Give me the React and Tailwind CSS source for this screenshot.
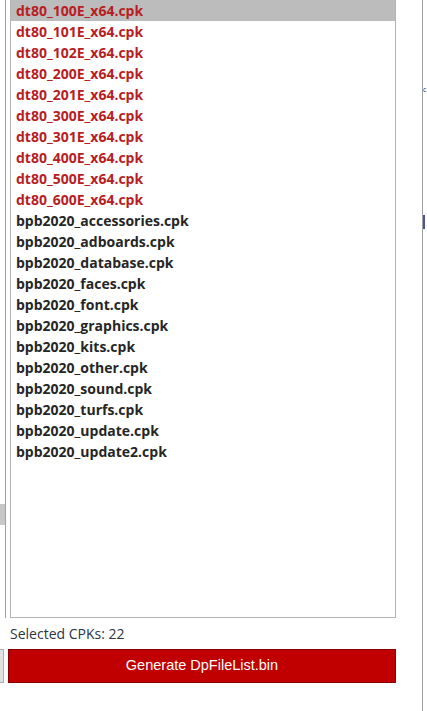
const dtFiles = [
  'dt80_100E_x64.cpk',
  'dt80_101E_x64.cpk',
  'dt80_102E_x64.cpk',
  'dt80_200E_x64.cpk',
  'dt80_201E_x64.cpk',
  'dt80_300E_x64.cpk',
  'dt80_301E_x64.cpk',
  'dt80_400E_x64.cpk',
  'dt80_500E_x64.cpk',
  'dt80_600E_x64.cpk',
];

const bpbFiles = [
  'bpb2020_accessories.cpk',
  'bpb2020_adboards.cpk',
  'bpb2020_database.cpk',
  'bpb2020_faces.cpk',
  'bpb2020_font.cpk',
  'bpb2020_graphics.cpk',
  'bpb2020_kits.cpk',
  'bpb2020_other.cpk',
  'bpb2020_sound.cpk',
  'bpb2020_turfs.cpk',
  'bpb2020_update.cpk',
  'bpb2020_update2.cpk',
];

export default function App() {
  const rows = [
    ...dtFiles.map((name) => ({ name, dt: true })),
    ...bpbFiles.map((name) => ({ name, dt: false })),
  ];

  return (
    <div className="relative flex h-[711px] w-[427px] overflow-hidden bg-white font-['Open_Sans',sans-serif]">
      {/* left panel edge, clipped */}
      <div className="flex w-[10px] shrink-0 flex-col">
        <div className="flex h-[618px] w-[6px] border-r border-[#a0a0a0]">
          <div className="mt-[504px] h-[21px] w-[5px] bg-[#c8c8c8]" />
        </div>
        <div className="mt-[31px] h-[34px] w-[4px] border border-l-0 border-[#adadad] bg-[#e1e1e1]" />
      </div>

      <div className="flex w-[386px] shrink-0 flex-col">
        {/* file list */}
        <div className="h-[618px] border border-t-0 border-[#b4b4b4]">
          {rows.map((row, i) => (
            <div
              key={row.name}
              className={`flex h-[21px] items-center pl-[5px] text-[14px] font-bold leading-none ${
                i === 0 ? 'bg-[#bcbcbc]' : ''
              } ${row.dt ? 'text-[#b81d24]' : 'text-[#262626]'}`}
            >
              {row.name}
            </div>
          ))}
        </div>

        <div className="mt-[6px] h-[19px] text-[14px] leading-[19px] text-[#2e3440]">
          Selected CPKs: 22
        </div>

        <button className="-ml-[2px] mt-[6px] h-[34px] w-[388px] border border-[#8b0000] bg-[#c00000] font-['Liberation_Sans',sans-serif] text-[14.5px] text-white">
          Generate DpFileList.bin
        </button>
      </div>

      {/* right splitter edge */}
      <div className="ml-[26px] h-full w-[1px] bg-[#a0a0a0]" />
      <div className="relative w-[4px] overflow-hidden">
        <span className="absolute left-0 top-[86px] text-[7px] leading-none text-[#2b2b6b]">c</span>
        <span className="absolute left-0 top-[215px] h-[14px] w-[2px] bg-[#5050a0]" />
      </div>
    </div>
  );
}
